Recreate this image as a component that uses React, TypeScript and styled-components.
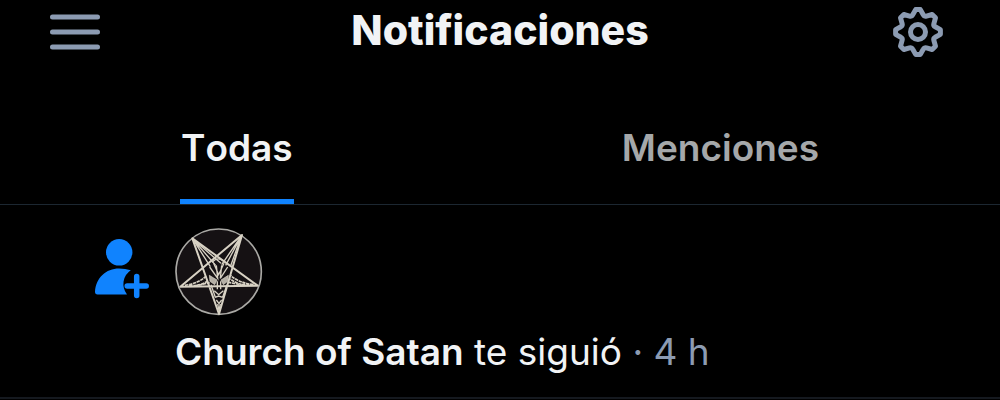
import React from "react";
import styled, { createGlobalStyle } from "styled-components";

const GlobalStyle = createGlobalStyle`
  * { box-sizing: border-box; }
  body {
    margin: 0;
    background: #000;
    color: #f1f3f5;
    font-family: Inter, "Liberation Sans", sans-serif;
  }
`;

const Header = styled.header`
  display: flex;
  align-items: center;
  justify-content: space-between;
  padding: 0 56px 0 48px;
  height: 64px;
`;

const IconButton = styled.button`
  display: flex;
  padding: 0;
  border: 0;
  background: none;
  color: #8c9bb2;
  cursor: pointer;
`;

const Title = styled.h1`
  flex: 1;
  margin: 0;
  padding: 0 0 4px 6px;
  text-align: center;
  font-size: 41px;
  line-height: 52px;
  font-weight: 800;
`;

const Tabs = styled.div`
  display: flex;
  justify-content: space-between;
  padding: 60px 18% 0;
  border-bottom: 1px solid #1c2731;
`;

const Tab = styled.button<{ $active?: boolean }>`
  padding: 0 1px 27px;
  border: 0;
  border-bottom: 5px solid ${(p) => (p.$active ? "#1083fe" : "transparent")};
  background: none;
  color: ${(p) => (p.$active ? "#f1f3f5" : "#a5a8aa")};
  font: 600 37px/48px Inter, "Liberation Sans", sans-serif;
  font-kerning: none;
  cursor: pointer;
`;

const Notification = styled.article`
  display: flex;
  gap: 24px;
  padding: 23px 24px 21px 93px;
  border-bottom: 2px solid #15191f;
`;

const KindIcon = styled.div`
  flex: none;
  padding-top: 11px;
`;

const Body = styled.div`
  flex: 1;
`;

const AvatarLink = styled.a`
  display: block;
  width: 88px;
  height: 88px;
`;

const Message = styled.p`
  margin: 12px 0 0;
  font-size: 37px;
  line-height: 48px;
`;

const Author = styled.a`
  color: inherit;
  font-weight: 600;
  text-decoration: none;
`;

const Time = styled.time`
  color: #8c9bb2;
`;

const MenuIcon = () => (
  <svg width="54" height="50" viewBox="0 0 54 50" stroke="currentColor" strokeWidth="5" strokeLinecap="round" aria-hidden="true">
    <path d="M4.500 10H49.500M4.500 25H49.500M4.500 40H49.500" />
  </svg>
);

const polar = (radius: number, degrees: number) => {
  const a = (degrees * Math.PI) / 180;
  return `${(26 + radius * Math.sin(a)).toFixed(2)} ${(26 - radius * Math.cos(a)).toFixed(2)}`;
};

const gearOutline =
  Array.from({ length: 8 }, (_, i) => {
    const a = i * 45;
    return `${i ? "L" : "M"}${polar(22.5, a - 6)}L${polar(22.5, a + 6)}L${polar(18, a + 17)}Q${polar(16.5, a + 22.5)} ${polar(18, a + 28)}`;
  }).join("") + "Z";

const GearIcon = () => (
  <svg width="52" height="52" viewBox="0 0 52 52" fill="none" stroke="currentColor" strokeWidth="5" strokeLinejoin="round" aria-hidden="true">
    <path d={gearOutline} />
    <circle cx="26" cy="26" r="7.500" />
  </svg>
);

const FollowIcon = () => (
  <svg width="58" height="60" viewBox="93 239 58 60" fill="#1083fe" role="img" aria-label="Nuevo seguidor">
    <circle cx="119.200" cy="252.300" r="13.200" />
    <path d="M97.500 294.500Q95 294.500 95 291.800C95.800 278 106 268.600 119 268.600Q125.500 268.600 130.800 270.200A16.700 16.700 0 0 0 127 294.500Z" />
    <path d="M136.700 276.500V295.500M127.200 286H146.200" stroke="#1083fe" strokeWidth="5.500" strokeLinecap="round" />
  </svg>
);

const AvatarArt = () => (
  <svg width="88" height="88" viewBox="1 0 262 264" fill="none" stroke="#d8d2c4" role="img" aria-label="Church of Satan">
    <circle cx="131" cy="131" r="128" fill="#151113" stroke="#aaa9a5" strokeWidth="5" />
    <path d="M52 31L248 173L16 176L201 21L132 258Z" strokeWidth="6" strokeLinejoin="round" />
    <path d="M54 34L138 106M54 34L122 112M54 34L106 116M199 24L140 110M199 24L152 112M199 24L166 116" strokeWidth="4" />
    <path d="M30 172Q70 166 94 144M42 173Q80 174 99 157M60 174L104 164M236 170Q190 164 168 143M224 171Q190 172 166 153M204 172L162 163" strokeWidth="5" strokeDasharray="10 2" />
    <path d="M111 103Q130 82 150 103M104 117L128 151L124 112M158 117L136 151L140 112M116 106L131 140L147 106" strokeWidth="4" />
    <path d="M103 142L126 156L119 170L105 160ZM160 142L138 156L145 170L158 160Z" fill="#b5b0a6" strokeWidth="2" />
    <path d="M108 170L121 208M156 170L143 208M127 160V184M137 160V184M118 188L131 200L145 188M120 208L131 204L143 208M124 216L132 226L140 216M128 228L132 248L136 228" strokeWidth="4" />
  </svg>
);

export default function App() {
  return (
    <>
      <GlobalStyle />
      <Header>
        <IconButton type="button" aria-label="Menú">
          <MenuIcon />
        </IconButton>
        <Title>Notificaciones</Title>
        <IconButton type="button" aria-label="Ajustes">
          <GearIcon />
        </IconButton>
      </Header>
      <Tabs role="tablist">
        <Tab type="button" role="tab" aria-selected="true" $active>
          Todas
        </Tab>
        <Tab type="button" role="tab" aria-selected="false">
          Menciones
        </Tab>
      </Tabs>
      <main>
        <Notification>
          <KindIcon>
            <FollowIcon />
          </KindIcon>
          <Body>
            <AvatarLink href="#perfil">
              <AvatarArt />
            </AvatarLink>
            <Message>
              <Author href="#perfil">Church of Satan</Author> te siguió <Time>· 4 h</Time>
            </Message>
          </Body>
        </Notification>
      </main>
    </>
  );
}
